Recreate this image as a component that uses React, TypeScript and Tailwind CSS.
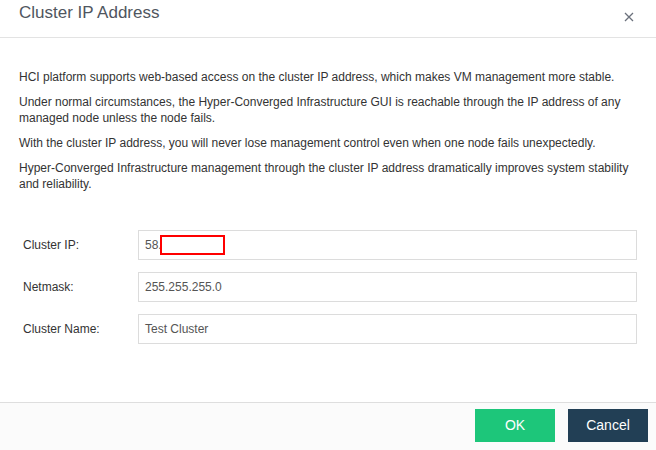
import React from "react";

const fields = [
  { label: "Cluster IP:", value: "58.", redacted: true },
  { label: "Netmask:", value: "255.255.255.0" },
  { label: "Cluster Name:", value: "Test Cluster" },
];

const paragraphs = [
  "HCI platform supports web-based access on the cluster IP address, which makes VM management more stable.",
  "Under normal circumstances, the Hyper-Converged Infrastructure GUI is reachable through the IP address of any managed node unless the node fails.",
  "With the cluster IP address, you will never lose management control even when one node fails unexpectedly.",
  "Hyper-Converged Infrastructure management through the cluster IP address dramatically improves system stability and reliability.",
];

export default function App() {
  return (
    <div className="w-[656px] h-[450px] bg-white flex flex-col font-['Liberation_Sans',Arial,sans-serif] overflow-hidden">
      {/* header */}
      <div className="h-[38px] shrink-0 flex items-start justify-between pl-[19px] pr-[20px] border-b border-[#e3e3e3]">
        <h1 className="pt-[3px] text-[17px] leading-[20px] text-[#505660]">Cluster IP Address</h1>
        <button className="mt-[10px] w-[14px] h-[14px] flex items-center justify-center text-[#6b717c]">
          <svg width="10" height="10" viewBox="0 0 10 10" fill="none" stroke="currentColor" strokeWidth="1.3">
            <path d="M1 1L9 9M9 1L1 9" />
          </svg>
        </button>
      </div>

      {/* body */}
      <div className="flex-1 flex flex-col">
        <div className="pt-[31px] pl-[19px] pr-[24px] flex flex-col gap-[9px] text-[12px] leading-[16px] text-[#333]">
          {paragraphs.map((p, i) => (
            <p key={i}>{p}</p>
          ))}
        </div>

        <div className="mt-[38px] pl-[23px] pr-[19px] flex flex-col gap-[12px]">
          {fields.map((f) => (
            <div key={f.label} className="flex items-center">
              <label className="w-[115px] text-[12px] text-[#333]">{f.label}</label>
              <div className="flex-1 h-[30px] border border-[#dcdcdc] flex items-center pl-[6px] text-[12px] text-[#555]">
                <span>{f.value}</span>
                {f.redacted && <span className="-ml-[2px] w-[65px] h-[20px] border-2 border-[#ff0000] bg-white" />}
              </div>
            </div>
          ))}
        </div>
      </div>

      {/* footer */}
      <div className="h-[48px] shrink-0 border-t border-[#dedede] bg-[#fbfbfb] flex items-start justify-end gap-[13px] pt-[6px] pr-[8px]">
        <button className="w-[80px] h-[33px] bg-[#1dc67a] text-white text-[14px]">OK</button>
        <button className="w-[80px] h-[33px] bg-[#223f55] text-white text-[14px]">Cancel</button>
      </div>
    </div>
  );
}
